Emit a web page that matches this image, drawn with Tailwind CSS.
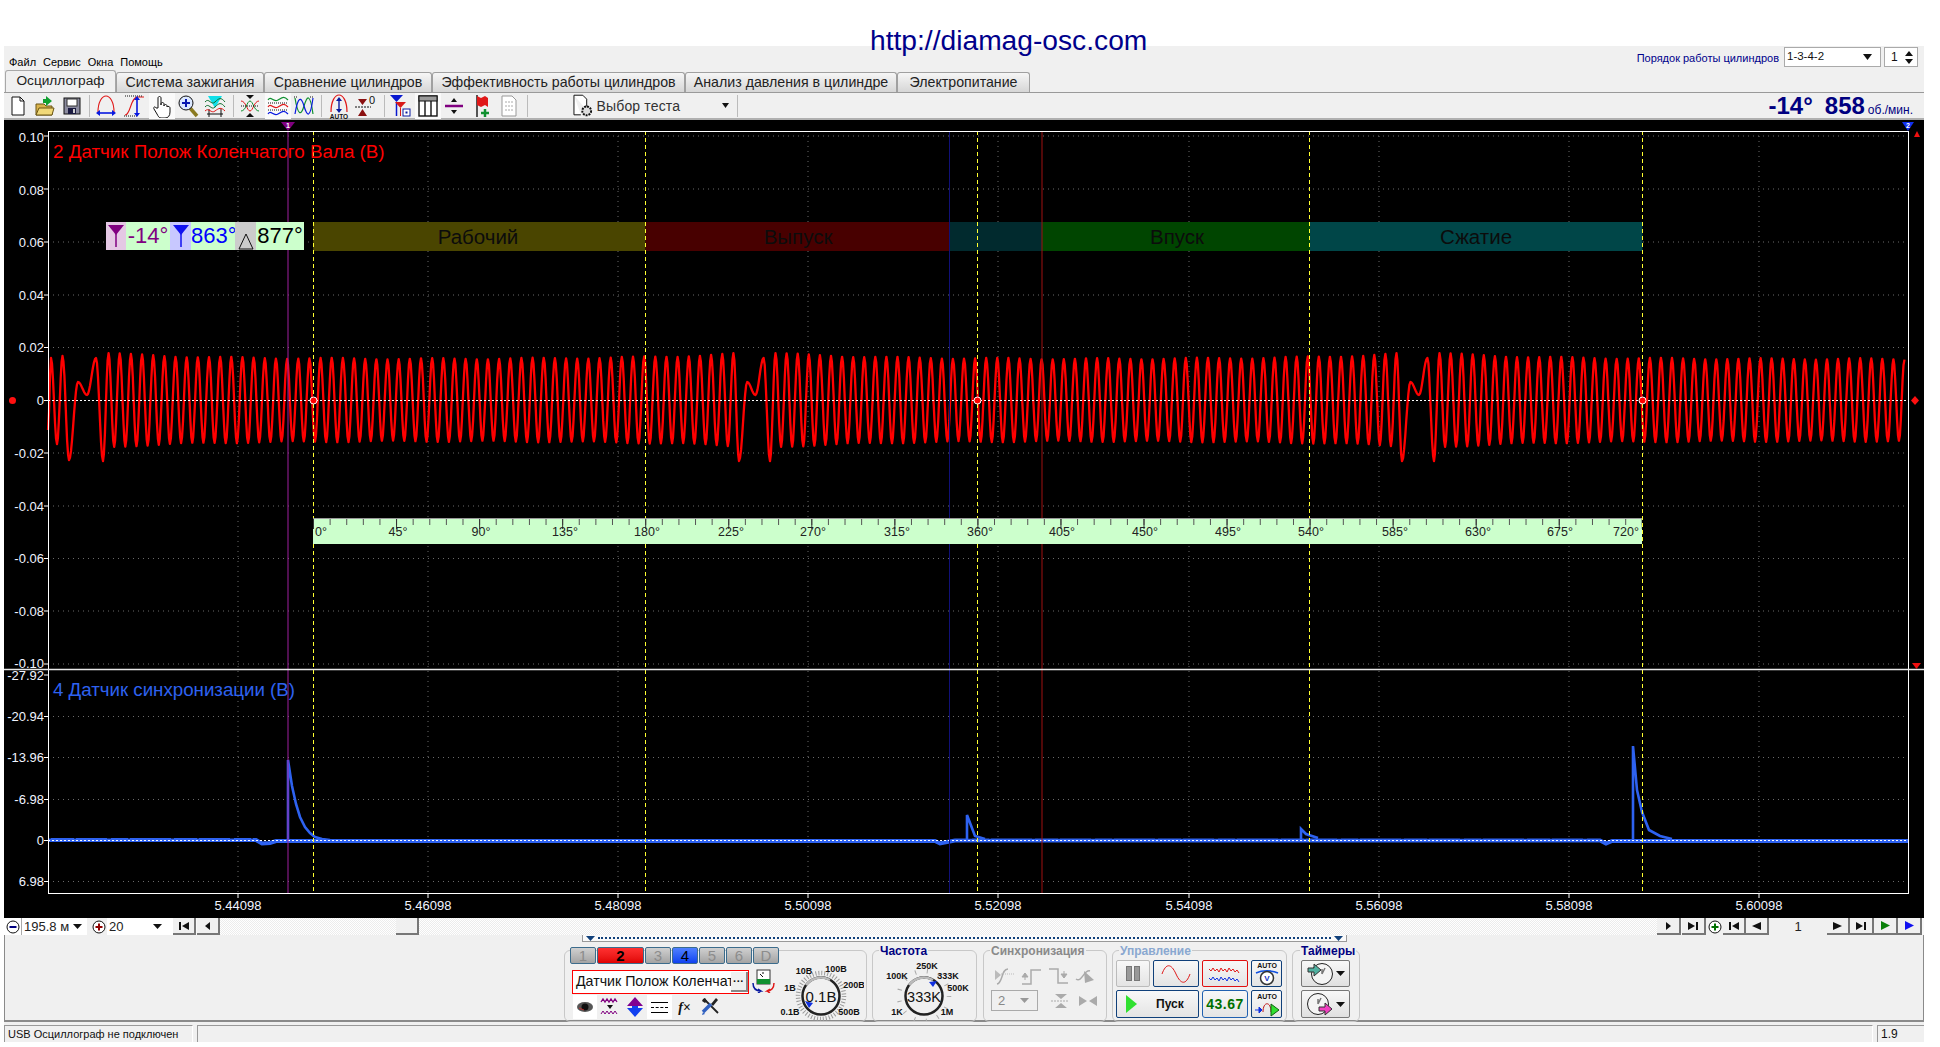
<!DOCTYPE html>
<html lang="ru"><head><meta charset="utf-8"><title>Осциллограф</title>
<script src="https://cdn.jsdelivr.net/npm/@tailwindcss/browser@4"></script>
</head>
<body class="bg-white font-['Liberation_Sans',Arial,sans-serif] text-[#111] w-[1940px] h-[1047px] overflow-hidden">
<!-- URL -->
<div class="h-[46px] pl-[870px] pt-[24px]"><div class="text-[28.2px] leading-[32px] text-[#00008b] whitespace-nowrap">http://diamag-osc.com</div></div>
<div class="ml-[4px] w-[1920px] bg-[#f0f0f0]">
  <!-- menu row -->
  <div class="h-[24px] flex items-start">
    <div class="flex gap-[7px] pl-[5px] pt-[9px] text-[11px] leading-[14px] text-black"><span>Файл</span><span>Сервис</span><span>Окна</span><span>Помощь</span></div>
    <div class="ml-auto flex items-center pr-[6px] pt-[1px]">
      <span class="text-[11px] text-[#00008b] mr-[5px] mt-[2px] whitespace-nowrap">Порядок работы цилиндров</span>
      <div class="w-[97px] h-[20px] bg-white border border-[#aaa] flex items-center pl-[2px] text-[11.5px]">1-3-4-2<svg class="ml-auto mr-[8px]" width="9" height="6"><polygon points="0,0 9,0 4.5,6" fill="#111"/></svg></div>
      <div class="w-[34px] h-[20px] ml-[3px] bg-white border border-[#aaa] flex items-center pl-[6px] text-[12px]">1<div class="ml-auto mr-[4px] flex flex-col gap-[3px]"><svg width="8" height="5"><polygon points="4,0 8,5 0,5" fill="#111"/></svg><svg width="8" height="5"><polygon points="0,0 8,0 4,5" fill="#111"/></svg></div></div>
    </div>
  </div>
  <!-- tabs -->
  <div class="h-[22px] flex items-end pl-[1px] text-[14.2px] text-[#222] whitespace-nowrap">
    <div class="w-[111px] h-[22px] flex items-center justify-center bg-[#f0f0f0] border border-b-0 border-[#a8a8a8] rounded-t-[3px] text-[13.7px]">Осциллограф</div>
    <div class="w-[148px] h-[20px] flex items-center justify-center bg-gradient-to-b from-[#f6f6f6] to-[#d6d6d6] border border-b-0 border-[#a0a0a0] rounded-t-[3px]">Система зажигания</div>
    <div class="w-[168px] h-[20px] flex items-center justify-center bg-gradient-to-b from-[#f6f6f6] to-[#d6d6d6] border border-b-0 border-[#a0a0a0] rounded-t-[3px]">Сравнение цилиндров</div>
    <div class="w-[253px] h-[20px] flex items-center justify-center bg-gradient-to-b from-[#f6f6f6] to-[#d6d6d6] border border-b-0 border-[#a0a0a0] rounded-t-[3px]">Эффективность работы цилиндров</div>
    <div class="w-[212px] h-[20px] flex items-center justify-center bg-gradient-to-b from-[#f6f6f6] to-[#d6d6d6] border border-b-0 border-[#a0a0a0] rounded-t-[3px]">Анализ давления в цилиндре</div>
    <div class="w-[133px] h-[20px] flex items-center justify-center bg-gradient-to-b from-[#f6f6f6] to-[#d6d6d6] border border-b-0 border-[#a0a0a0] rounded-t-[3px]">Электропитание</div>
  </div>
  <!-- toolbar -->
  <div class="h-[28px] flex items-center border-t border-t-[#999] border-b-2 border-b-[#b0b0b0] pl-[1px]">
    <div class="w-[26px] h-[26px] flex items-center justify-center"><svg width="16" height="20" viewBox="0 0 16 20"><path d="M2 1h8l4 4v14H2z" fill="#fff" stroke="#111"/><path d="M10 1v4h4" fill="none" stroke="#111"/></svg></div>
    <div class="w-[26px] h-[26px] ml-[1px] flex items-center justify-center"><svg width="22" height="22" viewBox="0 0 22 22"><path d="M2 9h8l2 2h6v9H2z" fill="#d9b24c" stroke="#6a5514"/><path d="M2 20l3-7h15l-2 7z" fill="#f0d878" stroke="#6a5514"/><path d="M12 1l6 5-6 5V8H9V4h3z" fill="#10a030"/></svg></div>
    <div class="w-[26px] h-[26px] ml-[1px] flex items-center justify-center"><svg width="18" height="18" viewBox="0 0 18 18"><rect x="1" y="1" width="16" height="16" fill="#8c8ca0" stroke="#111"/><rect x="4" y="2" width="10" height="7" fill="#fff" stroke="#333"/><rect x="5" y="11" width="8" height="6" fill="#1a1a40"/><rect x="10" y="12" width="2" height="4" fill="#ccc"/></svg></div>
    <div class="w-px h-[22px] ml-[4px] bg-[#bbb]"></div>
    <div class="w-[26px] h-[26px] ml-[3px] flex items-center justify-center"><svg width="22" height="24" viewBox="0 0 22 24"><path d="M3 18C3 8 7 2 11 2s8 6 8 16" fill="none" stroke="#e01818" stroke-width="1.1"/><path d="M3 19h16" stroke="#0818e0" stroke-width="1.6"/><path d="M1 19l4-3v6zM21 19l-4-3v6z" fill="#0818e0"/></svg></div>
    <div class="w-[26px] h-[26px] ml-[2px] flex items-center justify-center"><svg width="22" height="24" viewBox="0 0 22 24"><path d="M2 21c6 0 5-18 13-18h6" fill="none" stroke="#e01818" stroke-width="1.1"/><path d="M2 2h18M1 22h14" stroke="#111" stroke-dasharray="1 1"/><path d="M14 5v15" stroke="#0818e0" stroke-width="1.6"/><path d="M14 2l-3 4h6zM14 23l-3-4h6z" fill="#0818e0"/></svg></div>
    <div class="w-[26px] h-[26px] ml-[2px] flex items-center justify-center bg-[#fafafa]"><svg width="20" height="24" viewBox="0 0 20 24"><path d="M6 14V4c0-2 3-2 3 0v7-1c0-2 3-2 3 0v2c0-2 3-2 3 0v1c0-1 3-1 3 1v4c0 4-2 6-5 6H9c-2 0-3-2-4-4l-3-5c-1-2 1-3 2-1z" fill="#fff" stroke="#111"/></svg></div>
    <div class="w-[26px] h-[26px] flex items-center justify-center"><svg width="22" height="24" viewBox="0 0 22 24"><path d="M13 14l7 8" stroke="#8a7a20" stroke-width="3.5"/><circle cx="9" cy="9" r="7" fill="#dbe8ff" stroke="#111"/><path d="M5 9h8M9 5v8" stroke="#0818b0" stroke-width="2"/></svg></div>
    <div class="w-[26px] h-[26px] ml-[1px] flex items-center justify-center"><svg width="22" height="24" viewBox="0 0 22 24"><path d="M4 2h14l-7 12z" fill="#10dfe8"/><path d="M1 8c4-5 6 4 10 0s6-5 10 0M1 13c4-5 6 4 10 0s6-5 10 0" fill="none" stroke="#107030"/><path d="M3 20h16M5 15v8M17 15v8" stroke="#111"/><path d="M1 17c4-4 6 3 10 0s6-4 10 0" fill="none" stroke="#e01818"/></svg></div>
    <div class="w-px h-[22px] ml-[5px] bg-[#bbb]"></div>
    <div class="w-[26px] h-[26px] ml-[3px] flex items-center justify-center"><svg width="20" height="24" viewBox="0 0 20 24"><path d="M6 1h8l-4 4zM6 23h8l-4-4z" fill="#111"/><path d="M1 7c5 0 6 10 9 10s4-10 9-10" fill="none" stroke="#e01818"/><path d="M1 17c5 0 6-10 9-10s4 10 9 10" fill="none" stroke="#109030"/><path d="M1 12h18" stroke="#111" stroke-dasharray="1 1"/></svg></div>
    <div class="w-[26px] h-[26px] ml-[2px] flex items-center justify-center bg-[#fafafa]"><svg width="22" height="24" viewBox="0 0 22 24"><path d="M1 6c3-5 5 3 10 0s6-4 10 0" fill="none" stroke="#109030" stroke-width="1.2"/><path d="M1 13c3-5 5 3 10 0s6-4 10 0" fill="none" stroke="#e01818" stroke-width="1.2"/><path d="M1 20c3-5 5 3 10 0s6-4 10 0" fill="none" stroke="#0818e0" stroke-width="1.2"/><path d="M1 9h20M1 16h20" stroke="#111" stroke-dasharray="1 1"/></svg></div>
    <div class="w-[26px] h-[26px] flex items-center justify-center"><svg width="22" height="24" viewBox="0 0 22 24"><path d="M1 3h4M17 3h4" stroke="#111" stroke-dasharray="1 1"/><path d="M2 4c3 18 6 18 9 8s6-14 9 8" fill="none" stroke="#109030" stroke-width="1.2"/><path d="M2 20c3-18 6-18 9-8s6 14 9-8" fill="none" stroke="#0818e0" stroke-width="1.2"/></svg></div>
    <div class="w-px h-[22px] ml-[4px] bg-[#bbb]"></div>
    <div class="w-[26px] h-[26px] ml-[4px] flex items-center justify-center"><svg width="22" height="26" viewBox="0 0 22 26"><path d="M3 19C3 8 7 2 11 2s8 6 8 17" fill="none" stroke="#e01818" stroke-width="1.2"/><path d="M11 6v12" stroke="#0818a0" stroke-width="1.4"/><path d="M11 4l-3 4h6zM11 20l-3-4h6z" fill="#0818a0"/><text x="11" y="25.5" text-anchor="middle" font-size="6.5" font-weight="700" fill="#111">AUTO</text></svg></div>
    <div class="w-[26px] h-[26px] flex items-center justify-center"><svg width="22" height="24" viewBox="0 0 22 24"><path d="M4 5h9l-4.5 6zM4 22h9l-4.5-7z" fill="#8a1010"/><path d="M1 13h16" stroke="#111" stroke-dasharray="2 1"/><text x="18" y="10" text-anchor="middle" font-size="11" fill="#111">0</text></svg></div>
    <div class="w-px h-[22px] ml-[6px] bg-[#bbb]"></div>
    <div class="w-[26px] h-[26px] ml-[2px] flex items-center justify-center"><svg width="22" height="24" viewBox="0 0 22 24"><path d="M1 1h13l-6.5 7z" fill="#0818d0"/><path d="M7.500 8v14" stroke="#0818d0" stroke-width="1.5"/><path d="M6 8h11l-5.500 6z" fill="#d81818"/><path d="M11.500 14v8" stroke="#d81818"/><rect x="14" y="15" width="7" height="7" fill="#fff" stroke="#0818a0"/><rect x="16.500" y="17.500" width="2" height="2" fill="#0818a0"/></svg></div>
    <div class="w-[26px] h-[26px] ml-[2px] flex items-center justify-center bg-[#fafafa]"><svg width="20" height="22" viewBox="0 0 20 22"><rect x="1" y="1" width="18" height="20" fill="#fff" stroke="#111" stroke-width="1.4"/><rect x="1" y="1" width="18" height="5" fill="#9a9a9a" stroke="#111"/><path d="M7 6v15M13 6v15" stroke="#111" stroke-width="1.4"/></svg></div>
    <div class="w-[26px] h-[26px] flex items-center justify-center"><svg width="22" height="20" viewBox="0 0 22 20"><path d="M2 10h18" stroke="#800080" stroke-width="2.500"/><path d="M11 2l-3 4h6zM11 18l-3-4h6z" fill="#111"/></svg></div>
    <div class="w-[26px] h-[26px] ml-[2px] flex items-center justify-center"><svg width="20" height="24" viewBox="0 0 20 24"><path d="M5 1v22" stroke="#111" stroke-width="1.4"/><path d="M5 2l4 2 4-2 3 2v9l-3-2-4 2-4-2z" fill="#e01818"/><path d="M13 15v8M9 19h8" stroke="#109030" stroke-width="2.500"/></svg></div>
    <div class="w-[26px] h-[26px] ml-[1px] flex items-center justify-center"><svg width="16" height="22" viewBox="0 0 16 22"><path d="M1 1h10l4 4v16H1z" fill="#fff" stroke="#999"/><path d="M4 7h8M4 11h8M4 15h8" stroke="#aaa" stroke-dasharray="2 1"/></svg></div>
    <div class="w-px h-[22px] ml-[5px] bg-[#bbb]"></div>
    <div class="w-[210px] h-[22px] flex items-center">
      <svg class="ml-[44px]" width="22" height="24" viewBox="0 0 22 24"><path d="M2 1h9l4 4v11M2 1v20h7" fill="#fff" stroke="#111"/><circle cx="15" cy="17" r="4.500" fill="#ddd" stroke="#111" stroke-width="2" stroke-dasharray="2 1"/></svg>
      <span class="ml-[3px] mt-[2px] text-[14px] tracking-[0.15px] text-[#333] whitespace-nowrap">Выбор теста</span>
      <svg class="ml-[42px]" width="7" height="5"><polygon points="0,0 7,0 3.500,5" fill="#111"/></svg>
      <div class="w-px h-[22px] ml-[8px] bg-[#bbb]"></div>
    </div>
    <div class="ml-auto pr-[11px] flex items-baseline text-[#000080] font-bold whitespace-nowrap"><span class="text-[24px] leading-[26px]">-14°</span><span class="text-[24px] leading-[26px] ml-[12px]">858</span><span class="text-[12px] font-normal ml-[3px]">об./мин.</span></div>
  </div>
  <!-- chart -->
  <div class="relative h-[798px] bg-black overflow-hidden">
    <svg class="absolute inset-0 block" width="1920" height="798" viewBox="4 120 1920 798">
      <g stroke="#6a6a6a" stroke-dasharray="1 4" fill="none">
        <path d="M48 136H1908M48 189H1908M48 242H1908M48 295H1908M48 347.500H1908M48 453H1908M48 506H1908M48 558.500H1908M48 611H1908M48 664H1908"/>
        <path d="M48 716.500H1908M48 757.500H1908M48 799.500H1908M48 881.500H1908"/>
        <path d="M238 131V894M428 131V894M618 131V894M808 131V894M998 131V894M1189 131V894M1379 131V894M1569 131V894M1759 131V894"/>
      </g>
      <!-- phase bars -->
      <rect x="313" y="222" width="332.500" height="29" fill="#4a4500"/>
      <rect x="645.500" y="222" width="304" height="29" fill="#480000"/>
      <rect x="949.500" y="222" width="92.500" height="29" fill="#012a2e"/>
      <rect x="1042" y="222" width="268" height="29" fill="#004500"/>
      <rect x="1310" y="222" width="332.500" height="29" fill="#004648"/>
      <g fill="#0c0c0c" font-size="20.500" text-anchor="middle"><text x="478" y="244">Рабочий</text><text x="798" y="244">Выпуск</text><text x="1177" y="244">Впуск</text><text x="1476" y="244">Сжатие</text></g>
      <!-- traces -->
      <path id="wave" d="" fill="none" stroke="#ff0000" stroke-width="2.300" stroke-linejoin="round"/>
      <path d="M48 840H256L262 843.500L270 843L276 841H935L940 843.500L947 842L955 840.500H1600L1606 843.500L1612 841H1908" fill="none" stroke="#2e62f0" stroke-width="4"/>
      <path d="M48 838H1908" stroke="#000" stroke-width="1" stroke-dasharray="3 23 2 31 4 17 2 41" fill="none"/>
      <g fill="none" stroke="#2e62f0" stroke-width="2.600">
        <path d="M288 840V760L292 786L296 804L300 817L305 827L310 833L315 837L322 839L330 840"/>
        <path d="M967 840V815L975 836L985 839"/>
        <path d="M1301 840V829L1306 834L1318 838"/>
        <path d="M1633 840V746L1637 790L1642 812L1649 830L1660 836L1672 839"/>
      </g>
      <!-- zero lines -->
      <g stroke="#fff" stroke-dasharray="2 2"><path d="M48 400.500H1908M48 840.500H1908"/></g>
      <!-- cursors -->
      <path d="M288 131V894" stroke="#a020a0"/>
      <path d="M949.500 131V894" stroke="#101078"/>
      <path d="M1042 131V894" stroke="#a01010"/>
      <g stroke="#ffff30" stroke-dasharray="4 3"><path d="M313.500 131V894M645.500 131V894M977.500 131V894M1309.500 131V894M1642.500 131V894"/></g>
      <!-- frames -->
      <path d="M48.500 131V894M1908.500 131V894M48 131.500H1908M48 893.500H1908" stroke="#fff" fill="none"/>
      <path d="M4 669.500H1924" stroke="#e8e8e8" stroke-width="1.600"/>
      <!-- axis ticks -->
      <path d="M44 136H48M44 189H48M44 242H48M44 295H48M44 347.500H48M44 400.500H48M44 453H48M44 506H48M44 558.500H48M44 611H48M44 664H48M44 675H48M44 716.500H48M44 757.500H48M44 799.500H48M44 840.500H48M44 881.500H48" stroke="#fff"/>
      <path d="M238 894V898M428 894V898M618 894V898M808 894V898M998 894V898M1189 894V898M1379 894V898M1569 894V898M1759 894V898" stroke="#fff"/>
      <g fill="#f0f4ff" font-size="13" text-anchor="end">
        <text x="44" y="142">0.10</text><text x="44" y="195">0.08</text><text x="44" y="247">0.06</text><text x="44" y="300">0.04</text><text x="44" y="352">0.02</text><text x="44" y="405">0</text><text x="44" y="458">-0.02</text><text x="44" y="511">-0.04</text><text x="44" y="563">-0.06</text><text x="44" y="616">-0.08</text><text x="44" y="668">-0.10</text>
        <text x="44" y="680">-27.92</text><text x="44" y="721">-20.94</text><text x="44" y="762">-13.96</text><text x="44" y="804">-6.98</text><text x="44" y="845">0</text><text x="44" y="886">6.98</text>
      </g>
      <g fill="#f0f4ff" font-size="13" text-anchor="middle">
        <text x="238" y="910">5.44098</text><text x="428" y="910">5.46098</text><text x="618" y="910">5.48098</text><text x="808" y="910">5.50098</text><text x="998" y="910">5.52098</text><text x="1189" y="910">5.54098</text><text x="1379" y="910">5.56098</text><text x="1569" y="910">5.58098</text><text x="1759" y="910">5.60098</text>
      </g>
      <text x="53" y="158" fill="#ff0000" font-size="18.800">2 Датчик Полож Коленчатого Вала (В)</text>
      <text x="53" y="696" fill="#2e62f0" font-size="18.700">4 Датчик синхронизации (В)</text>
      <!-- ruler -->
      <rect x="313" y="518" width="1329" height="26" fill="#ccffcc"/>
      <path d="M313 518.500H1642" stroke="#999" fill="none"/>
      <path d="M313 522H1642" stroke="#555" stroke-width="6" stroke-dasharray="1 15.610" fill="none"/>
      <path d="M313 524H1642" stroke="#333" stroke-width="10" stroke-dasharray="1 82.050" fill="none"/>
      <g fill="#222" font-size="12.500" text-anchor="middle">
        <text x="321" y="536">0°</text><text x="398" y="536">45°</text><text x="481" y="536">90°</text><text x="565" y="536">135°</text><text x="647" y="536">180°</text><text x="731" y="536">225°</text><text x="813" y="536">270°</text><text x="897" y="536">315°</text><text x="980" y="536">360°</text><text x="1062" y="536">405°</text><text x="1145" y="536">450°</text><text x="1228" y="536">495°</text><text x="1311" y="536">540°</text><text x="1395" y="536">585°</text><text x="1478" y="536">630°</text><text x="1560" y="536">675°</text><text x="1626" y="536">720°</text>
      </g>
      <!-- markers -->
      <g fill="#ff0000" stroke="#fff"><circle cx="313.500" cy="400.500" r="3.500"/><circle cx="977.500" cy="400.500" r="3.500"/><circle cx="1642.500" cy="400.500" r="3.500"/></g>
      <circle cx="12.500" cy="400.500" r="3.500" fill="#ff1010"/>
      <polygon points="1911,400.500 1915,396 1919,400.500 1915,405" fill="#ff1010"/>
      <polygon points="281,122 295,122 288,131" fill="#800080"/><text x="288" y="128" fill="#fff" font-size="7" font-weight="700" text-anchor="middle">1</text>
      <polygon points="1902,122 1914,122 1908,131" fill="#1030f0"/><text x="1908" y="128" fill="#fff" font-size="7" font-weight="700" text-anchor="middle">2</text>
      <polygon points="1914,137 1920,137 1917,131" fill="#f01010"/>
      <polygon points="1912,663 1921,663 1916.500,669" fill="#f01010"/>
    </svg>
    <!-- cursor readout -->
    <div class="absolute left-[102px] top-[102px] h-[28px] flex items-center text-[22px] leading-[28px] whitespace-nowrap">
      <div class="w-[20px] h-[28px] bg-[#e4c8e4] flex justify-center items-center"><svg width="16" height="24" viewBox="0 0 16 24"><polygon points="0,1 16,1 8,11" fill="#800080"/><path d="M8 8V23" stroke="#800080" stroke-width="1.500"/></svg></div>
      <div class="w-[44px] h-[28px] bg-[#ccffcc] text-[#800080] text-center">-14°</div>
      <div class="w-[21px] h-[28px] bg-[#c8c8ff] flex justify-center items-center"><svg width="16" height="24" viewBox="0 0 16 24"><polygon points="0,1 16,1 8,11" fill="#1010f0"/><path d="M8 8V23" stroke="#1010f0" stroke-width="1.500"/></svg></div>
      <div class="w-[44px] h-[28px] bg-[#ccffcc] text-[#0000ff] text-center">863°</div>
      <div class="w-[21px] h-[28px] bg-[#cccccc] flex justify-center items-end"><svg width="16" height="18" viewBox="0 0 16 18"><polygon points="8,2 15,17 1,17" fill="none" stroke="#111"/></svg></div>
      <div class="w-[48px] h-[28px] bg-[#ccffcc] text-black text-center">877°</div>
    </div>
  </div>
  <!-- scroll row -->
  <div class="h-[17px] flex items-stretch bg-[#f8f8f8] text-[13px] leading-[17px]">
    <div class="w-[18px] bg-white flex items-center justify-center border-r border-[#aaa]"><svg width="14" height="14"><circle cx="7" cy="7" r="6" fill="#fff" stroke="#111"/><path d="M3.500 7h7" stroke="#000080" stroke-width="2"/></svg></div>
    <div class="w-[65px] bg-white flex items-center pl-[2px] text-[#222]">195.8 м<svg class="ml-auto mr-[5px]" width="9" height="5"><polygon points="0,0 9,0 4.500,5" fill="#111"/></svg></div>
    <div class="w-[3px] bg-[#f0f0f0]"></div>
    <div class="w-[17px] bg-[#f0f0f0] flex items-center justify-center"><svg width="14" height="14"><circle cx="7" cy="7" r="6" fill="#fff" stroke="#111"/><path d="M3.500 7h7M7 3.500v7" stroke="#900000" stroke-width="2"/></svg></div>
    <div class="w-[63px] bg-white flex items-center pl-[2px] text-[#222]">20<svg class="ml-auto mr-[8px]" width="9" height="5"><polygon points="0,0 9,0 4.500,5" fill="#111"/></svg></div>
    <div class="w-[3px] bg-white"></div>
    <div class="w-[23px] bg-[#f0f0f0] border-r-2 border-b-2 border-[#777] flex items-center justify-center"><svg width="10" height="8"><path d="M0 0h2v8H0zM3 4l7-4v8z" fill="#111"/></svg></div>
    <div class="w-[23px] ml-[1px] bg-[#f0f0f0] border-r-2 border-b-2 border-[#777] flex items-center justify-center"><svg width="5" height="8"><path d="M0 4l5-4v8z" fill="#111"/></svg></div>
    <div class="w-[176px] bg-[repeating-conic-gradient(#ffffff_0_25%,#ececec_0_50%)] bg-[length:2px_2px]"></div>
    <div class="w-[23px] bg-[#f0f0f0] border-r-2 border-b-2 border-[#777]"></div>
    <div class="w-[1238px] bg-[repeating-conic-gradient(#ffffff_0_25%,#ececec_0_50%)] bg-[length:2px_2px]"></div>
    <div class="w-[24px] bg-[#f0f0f0] border-r-2 border-b-2 border-[#777] flex items-center justify-center"><svg width="5" height="8"><path d="M5 4L0 0v8z" fill="#111"/></svg></div>
    <div class="w-[24px] ml-[1px] bg-[#f0f0f0] border-r-2 border-b-2 border-[#777] flex items-center justify-center"><svg width="10" height="8"><path d="M10 0H8v8h2zM7 4L0 0v8z" fill="#111"/></svg></div>
    <div class="w-[17px] bg-[#f0f0f0] flex items-center justify-center"><svg width="14" height="14"><circle cx="7" cy="7" r="6" fill="#fff" stroke="#111"/><path d="M3.500 7h7M7 3.500v7" stroke="#007000" stroke-width="2"/></svg></div>
    <div class="w-[23px] bg-[#f0f0f0] border-r-2 border-b-2 border-[#777] flex items-center justify-center"><svg width="10" height="8"><path d="M0 0h2v8H0zM3 4l7-4v8z" fill="#111"/></svg></div>
    <div class="w-[23px] bg-[#f0f0f0] border-r-2 border-b-2 border-[#777] flex items-center justify-center"><svg width="9" height="8"><path d="M0 4l9-4v8z" fill="#111"/></svg></div>
    <div class="w-[58px] bg-[#f0f0f0] text-center text-[#222]">1</div>
    <div class="w-[23px] bg-[#f0f0f0] border-r-2 border-b-2 border-[#777] flex items-center justify-center"><svg width="9" height="8"><path d="M9 4L0 0v8z" fill="#111"/></svg></div>
    <div class="w-[24px] bg-[#f0f0f0] border-r-2 border-b-2 border-[#777] flex items-center justify-center"><svg width="10" height="8"><path d="M10 0H8v8h2zM7 4L0 0v8z" fill="#111"/></svg></div>
    <div class="w-[24px] bg-[#f0f0f0] border-r-2 border-b-2 border-[#777] flex items-center justify-center"><svg width="9" height="9"><path d="M9 4.500L0 0v9z" fill="#0a800a"/></svg></div>
    <div class="w-[24px] bg-[#f0f0f0] border-r-2 border-b-2 border-[#777] flex items-center justify-center"><svg width="9" height="9"><path d="M9 4.500L0 0v9z" fill="#1010f0"/></svg></div>
  </div>
  <!-- control panel -->
  <div class="h-[87px] border-l border-r border-b-2 border-[#8a8a8a]">
    <div class="ml-[577px] w-[765px] h-[7px] border border-t-0 border-[#999] bg-[#fafafa] flex items-center pl-[3px] pr-[3px]">
      <svg width="9" height="5"><polygon points="0,0 9,0 4.500,5" fill="#10407a"/></svg>
      <div class="flex-1 mx-[3px] border-t-2 border-dotted border-[#10407a]"></div>
      <svg width="9" height="5"><polygon points="0,0 9,0 4.500,5" fill="#10407a"/></svg>
    </div>
    <div class="flex pl-[559px] pt-[8px] gap-[5px]">
      <!-- channels -->
      <div class="relative w-[303px] h-[72px] border border-[#c8c8c8] rounded-[6px]">
        <div class="absolute -top-[4px] left-[5px] flex gap-px text-[15px] leading-[15px] text-[#8c8c8c]">
          <div class="w-[26px] h-[17px] flex items-center justify-center rounded-[2px] border border-[#3c6c8c] bg-gradient-to-b from-[#d0d0d0] to-[#a4a4a4]">1</div>
          <div class="w-[47px] h-[17px] flex items-center justify-center rounded-[2px] border border-[#3c6c8c] bg-gradient-to-b from-[#ff3030] to-[#e00000] text-black font-bold">2</div>
          <div class="w-[26px] h-[17px] flex items-center justify-center rounded-[2px] border border-[#3c6c8c] bg-gradient-to-b from-[#d0d0d0] to-[#a4a4a4]">3</div>
          <div class="w-[26px] h-[17px] flex items-center justify-center rounded-[2px] border border-[#3c6c8c] bg-gradient-to-b from-[#5080ff] to-[#1040f0] text-black">4</div>
          <div class="w-[26px] h-[17px] flex items-center justify-center rounded-[2px] border border-[#3c6c8c] bg-gradient-to-b from-[#d0d0d0] to-[#a4a4a4]">5</div>
          <div class="w-[26px] h-[17px] flex items-center justify-center rounded-[2px] border border-[#3c6c8c] bg-gradient-to-b from-[#d0d0d0] to-[#a4a4a4]">6</div>
          <div class="w-[26px] h-[17px] flex items-center justify-center rounded-[2px] border border-[#3c6c8c] bg-gradient-to-b from-[#d0d0d0] to-[#a4a4a4]">D</div>
        </div>
        <div class="flex pt-[19px] pl-[7px]">
          <div class="w-[177px] h-[24px] bg-white border border-[#ff0000] flex items-center pl-[3px] text-[14.2px] text-[#111] whitespace-nowrap">
            <span class="w-[154px]">Датчик Полож Коленчат</span>
            <div class="w-[17px] h-[20px] ml-[1px] shrink-0 bg-[#f0f0f0] border-r-2 border-b-2 border-[#888] flex items-center justify-center text-[11px] font-bold leading-[8px]">···</div>
          </div>
          <svg class="ml-[2px] mt-[-1px]" width="24" height="24" viewBox="0 0 24 24"><rect x="6" y="1" width="13" height="14" fill="#fff" stroke="#333"/><rect x="6" y="10" width="13" height="5" fill="#109030"/><path d="M9 5l3 3M12 3v2" stroke="#111"/><path d="M2 14c0 5 3 8 8 8l-3-2m3 2l-3 2" fill="none" stroke="#0818a0" stroke-width="1.500"/><path d="M23 14c0 5-3 8-7 8l3-2m-3 2l3 2" fill="none" stroke="#e01818" stroke-width="1.500"/></svg>
        </div>
        <div class="absolute left-[8px] bottom-[2px] flex items-center h-[24px]">
          <div class="w-[24px] h-[24px] bg-white flex items-center justify-center"><svg width="18" height="12" viewBox="0 0 18 12"><ellipse cx="9" cy="6" rx="8" ry="5" fill="#555"/><circle cx="9" cy="6" r="3.500" fill="#111"/><path d="M3 7l5 2" stroke="#c03030"/></svg></div>
          <div class="w-[25px] flex justify-center"><svg width="20" height="20" viewBox="0 0 20 20"><path d="M1 5l2-3 2 3 2-3 2 3 2-3 2 3 2-3 2 3" fill="none" stroke="#800080" stroke-width="1.300"/><path d="M1 17l2-3 2 3 2-3 2 3 2-3 2 3 2-3 2 3" fill="none" stroke="#800080"/><polygon points="7,8 13,8 10,12" fill="#111"/></svg></div>
          <div class="w-[25px] flex justify-center"><svg width="18" height="22" viewBox="0 0 18 22"><path d="M9 1L1 10h5v2h6v-2h5z" fill="#800090"/><path d="M9 21l8-9h-5v-2H6v2H1z" fill="#1040f0"/></svg></div>
          <div class="w-[25px] h-[24px] bg-white flex flex-col justify-center gap-[4px] px-[4px]"><div class="border-t border-black"></div><div class="border-t border-dashed border-black"></div><div class="border-t border-black"></div></div>
          <div class="w-[25px] text-center text-[14px] italic font-bold font-['Liberation_Serif',serif]">f×</div>
          <div class="w-[25px] flex justify-center"><svg width="20" height="20" viewBox="0 0 20 20"><path d="M4 2l14 14" stroke="#222" stroke-width="1.800"/><path d="M3 2l2-1 2 3-2 2-3-2z" fill="#222"/><path d="M16 1l2 2-5 6-2-2z" fill="#222"/><path d="M11 7l-8 8" stroke="#3060c0" stroke-width="3.500"/><path d="M3 15l-1 3 3-1z" fill="#3060c0"/></svg></div>
        </div>
        <svg class="absolute left-[213px] top-[6px]" width="86" height="64" viewBox="0 0 86 64">
          <circle cx="43" cy="39" r="23" fill="none" stroke="#999" stroke-width="4.500" stroke-dasharray="1 2"/>
          <circle cx="43" cy="39" r="18.500" fill="none" stroke="#222" stroke-width="2.500"/>
          <path d="M28 28A18.500 18.500 0 0 1 52 23" fill="none" stroke="#bbb" stroke-width="2.500"/>
          <path d="M31 51l-4-7 8 2z" fill="#1030e0"/>
          <text x="43" y="44.500" text-anchor="middle" font-size="15" fill="#111">0.1В</text>
          <g font-size="9" fill="#111" font-weight="700" text-anchor="middle"><text x="12" y="58">0.1В</text><text x="71" y="58">500В</text><text x="12" y="34">1В</text><text x="26" y="17">10В</text><text x="58" y="15">100В</text><text x="76" y="31">200В</text></g>
        </svg>
      </div>
      <!-- frequency -->
      <div class="relative w-[105px] h-[72px] border border-[#c8c8c8] rounded-[6px]">
        <div class="absolute -top-[6px] left-[6px] bg-[#f0f0f0] px-px text-[12px] leading-[13px] font-bold text-[#000080]">Частота</div>
        <svg class="absolute left-0 top-[6px]" width="104" height="64" viewBox="0 0 104 64">
          <circle cx="51" cy="39" r="25" fill="none" stroke="#aaa" stroke-width="4.500" stroke-dasharray="1 11"/>
          <circle cx="51" cy="39" r="18.500" fill="none" stroke="#222" stroke-width="2.500"/>
          <path d="M36 28A18.500 18.500 0 0 1 60 23" fill="none" stroke="#bbb" stroke-width="2.500"/>
          <path d="M64 24l-8 1 4 5z" fill="#1030e0"/>
          <text x="51" y="44.500" text-anchor="middle" font-size="14.500" fill="#111">333K</text>
          <g font-size="9" fill="#111" font-weight="700" text-anchor="middle"><text x="24" y="22">100K</text><text x="54" y="12">250K</text><text x="75" y="22">333K</text><text x="85" y="34">500K</text><text x="24" y="58">1K</text><text x="74" y="58">1M</text></g>
        </svg>
      </div>
      <!-- sync -->
      <div class="relative w-[124px] h-[72px] ml-px border border-[#c8c8c8] rounded-[6px]">
        <div class="absolute -top-[6px] left-[6px] bg-[#f0f0f0] px-px text-[12px] leading-[13px] font-bold text-[#8a8a8a]">Синхронизация</div>
        <div class="flex pt-[14px] pl-[9px] gap-[4px]">
          <svg width="23" height="22" viewBox="0 0 23 22"><path d="M4 19c6-1 4-15 11-15" fill="none" stroke="#aaa" stroke-width="1.500"/><path d="M2 5v10l6-5z" fill="#bbb"/><path d="M8 9h14" stroke="#bbb" stroke-dasharray="1 1"/></svg>
          <svg width="23" height="22" viewBox="0 0 23 22"><path d="M2 19h9V5h10" fill="none" stroke="#aaa" stroke-width="1.500"/><path d="M5 15v-7m0 0l-3 4h6z" fill="#aaa" stroke="#aaa"/></svg>
          <svg width="23" height="22" viewBox="0 0 23 22"><path d="M2 4h9v14h10" fill="none" stroke="#aaa" stroke-width="1.500"/><path d="M17 6v7m0 0l-3-4h6z" fill="#aaa" stroke="#aaa"/></svg>
          <svg width="23" height="22" viewBox="0 0 23 22"><path d="M2 14c6 4 8-10 14-8" fill="none" stroke="#aaa" stroke-width="1.500"/><path d="M10 6l10 9-9 3z" fill="#aaa"/></svg>
        </div>
        <div class="flex items-center pl-[7px] pt-[3px]">
          <div class="w-[47px] h-[21px] border border-[#aaa] bg-[#f0f0f0] flex items-center pl-[6px] text-[13px] text-[#888]">2<svg class="ml-auto mr-[8px]" width="9" height="5"><polygon points="0,0 9,0 4.500,5" fill="#999"/></svg></div>
          <svg class="ml-[12px]" width="20" height="20" viewBox="0 0 20 20"><path d="M1 10h18" stroke="#aaa" stroke-dasharray="2 1"/><path d="M5 3h12l-6 5zM5 17h12l-6-5z" fill="#aaa"/></svg>
          <svg class="ml-[8px]" width="20" height="12" viewBox="0 0 20 12"><path d="M1 1l8 5-8 5zM19 1l-8 5 8 5z" fill="#aaa"/></svg>
        </div>
      </div>
      <!-- control -->
      <div class="relative w-[175px] h-[72px] border border-[#c8c8c8] rounded-[6px] pt-[9px] pl-[3px]">
        <div class="absolute -top-[6px] left-[6px] bg-[#f0f0f0] px-px text-[12px] leading-[13px] font-bold text-[#8aa8d0]">Управление</div>
        <div class="flex gap-[3px]">
          <div class="w-[34px] h-[27px] rounded-[2px] border border-[#bbb] bg-gradient-to-b from-[#f8f8f8] to-[#e4e4e4] flex items-center justify-center gap-[2px]"><div class="w-[6px] h-[15px] bg-[#999] border border-[#777]"></div><div class="w-[6px] h-[15px] bg-[#999] border border-[#777]"></div></div>
          <div class="w-[46px] h-[27px] rounded-[2px] border border-[#10407a] bg-gradient-to-b from-[#f8f8f8] to-[#e4e4e4] flex items-center justify-center"><svg width="30" height="20" viewBox="0 0 30 20"><path d="M1 10C5-1 10-1 15 10s10 11 14 0" fill="none" stroke="#e01818"/></svg></div>
          <div class="w-[46px] h-[27px] rounded-[2px] border border-[#e01010] bg-gradient-to-b from-[#f8f8f8] to-[#e4e4e4] flex items-center justify-center"><svg width="34" height="20" viewBox="0 0 34 20"><path d="M1 5l2 2 2-3 2 3 2-2 2 3 2-4 2 3 2-2 2 3 2-4 2 3 2-2 2 3 2-2 2 3" fill="none" stroke="#e01818"/><path d="M1 14l2 2 2-3 2 3 2-2 2 3 2-4 2 3 2-2 2 3 2-4 2 3 2-2 2 3 2-2 2 3" fill="none" stroke="#1030e0"/></svg></div>
          <div class="w-[31px] h-[27px] rounded-[2px] border border-[#10407a] bg-gradient-to-b from-[#f8f8f8] to-[#e4e4e4] flex items-center justify-center"><svg width="26" height="25" viewBox="0 0 26 25"><text x="13" y="7" text-anchor="middle" font-size="7" font-weight="700" fill="#111">AUTO</text><path d="M2 12c6-3 16-3 22 0" fill="none" stroke="#1050e0" stroke-width="1.500"/><circle cx="13" cy="17" r="6.500" fill="#fff" stroke="#333" stroke-width="1.500"/><text x="13" y="20" text-anchor="middle" font-size="8" font-weight="700" fill="#1030c0">V</text></svg></div>
        </div>
        <div class="flex gap-[3px] mt-[3px]">
          <div class="w-[83px] h-[28px] rounded-[2px] border border-[#10407a] bg-gradient-to-b from-[#f8f8f8] to-[#e4e4e4] flex items-center"><svg class="ml-[9px]" width="11" height="18" viewBox="0 0 11 18"><polygon points="0,0 11,9 0,18" fill="#30e030"/></svg><span class="ml-[19px] text-[12px] font-bold text-[#111]">Пуск</span></div>
          <div class="w-[46px] h-[28px] rounded-[3px] border border-[#2060b0] bg-gradient-to-b from-[#f8f8f8] to-[#e4e4e4] flex items-center justify-center text-[14px] font-bold tracking-[0.5px] text-[#007000]">43.67</div>
          <div class="w-[31px] h-[28px] rounded-[2px] border border-[#10407a] bg-gradient-to-b from-[#f8f8f8] to-[#e4e4e4] flex items-center justify-center"><svg width="26" height="25" viewBox="0 0 26 25"><text x="13" y="7" text-anchor="middle" font-size="7" font-weight="700" fill="#111">AUTO</text><path d="M1 18h7m0 0l-3-3v6z" stroke="#1030e0" fill="#1030e0"/><path d="M9 20c0-11 8-11 8 0" fill="none" stroke="#c01818"/><path d="M17 12l8 6-8 6z" fill="#30e030" stroke="#106010"/></svg></div>
        </div>
      </div>
      <!-- timers -->
      <div class="relative w-[68px] h-[72px] border border-[#c8c8c8] rounded-[6px] pt-[9px] pl-[8px]">
        <div class="absolute -top-[6px] left-[7px] bg-[#f0f0f0] px-px text-[12px] leading-[13px] font-bold text-[#000080]">Таймеры</div>
        <div class="w-[49px] h-[27px] rounded-[2px] border border-[#777] bg-gradient-to-b from-[#f8f8f8] to-[#e0e0e0] flex items-center"><svg class="ml-[5px]" width="26" height="24" viewBox="0 0 26 24"><circle cx="15" cy="12" r="10.500" fill="#f4f4f4" stroke="#222"/><path d="M15 12l3-6M15 12V7" stroke="#777" stroke-width="1.500"/><path d="M1 6h6V2l7 6-7 6v-4H1z" fill="#50b0a0" stroke="#333"/></svg><svg class="ml-[3px]" width="9" height="5"><polygon points="0,0 9,0 4.500,5" fill="#111"/></svg></div>
        <div class="w-[49px] h-[28px] mt-[3px] rounded-[2px] border border-[#777] bg-gradient-to-b from-[#f8f8f8] to-[#e0e0e0] flex items-center"><svg class="ml-[5px]" width="26" height="24" viewBox="0 0 26 24"><circle cx="11" cy="12" r="10.500" fill="#f4f4f4" stroke="#222"/><path d="M11 12l3-6M11 12V7" stroke="#777" stroke-width="1.500"/><path d="M12 15h6v-4l7 6-7 6v-4h-6z" fill="#f040c0" stroke="#333"/></svg><svg class="ml-[3px]" width="9" height="5"><polygon points="0,0 9,0 4.500,5" fill="#111"/></svg></div>
      </div>
    </div>
  </div>
  <!-- status -->
  <div class="mt-[3px] h-[17px] flex text-[11px] leading-[16px] text-[#111]">
    <div class="w-[189px] pl-[3px] border-t border-l border-[#999] border-r border-r-white whitespace-nowrap">USB Осциллограф не подключен</div>
    <div class="w-[1676px] ml-[4px] border-t border-l border-[#999] border-r border-r-white"></div>
    <div class="w-[47px] ml-[4px] pl-[3px] border-t border-l border-[#999] text-[12px]">1.9</div>
  </div>
</div>
<script>
(function(){
  var e=[[48,430],[51,358],[57,444],[62.5,356],[69,460]];
  function gap(a,b){var r=(b-a)/34;e.push([a+9*r,382],[a+18*r,395],[a+27*r,358],[b,461]);}
  function run(a,b,n){var s=(b-a)/n;for(var k=0;k<n;k++){var d=Math.min(Math.abs(a+k*s-86),Math.abs(a+k*s-755),Math.abs(a+k*s-1418)),m=40+7*Math.exp(-d/90)+Math.sin(k*0.7)*0.7;
    e.push([a+k*s+s/2,400-m-1]);if(k<n-1)e.push([a+(k+1)*s,400+m+1]);}}
  gap(69,103);run(103,739,57);e.push([739,461]);gap(739,770);run(770,1402,57);e.push([1402,461]);gap(1402,1434);run(1434,1910,43);
  var d='M48 430';
  for(var i=0;i<e.length-1;i++){var a=e[i],b=e[i+1],st=Math.max(2,Math.round(b[0]-a[0]));
    for(var j=1;j<=st;j++){var t=j/st,c=(1-Math.cos(Math.PI*t))/2;d+='L'+(a[0]+(b[0]-a[0])*t).toFixed(1)+' '+(a[1]+(b[1]-a[1])*c).toFixed(1);}}
  document.getElementById('wave').setAttribute('d',d);
})();
</script>
</body></html>
